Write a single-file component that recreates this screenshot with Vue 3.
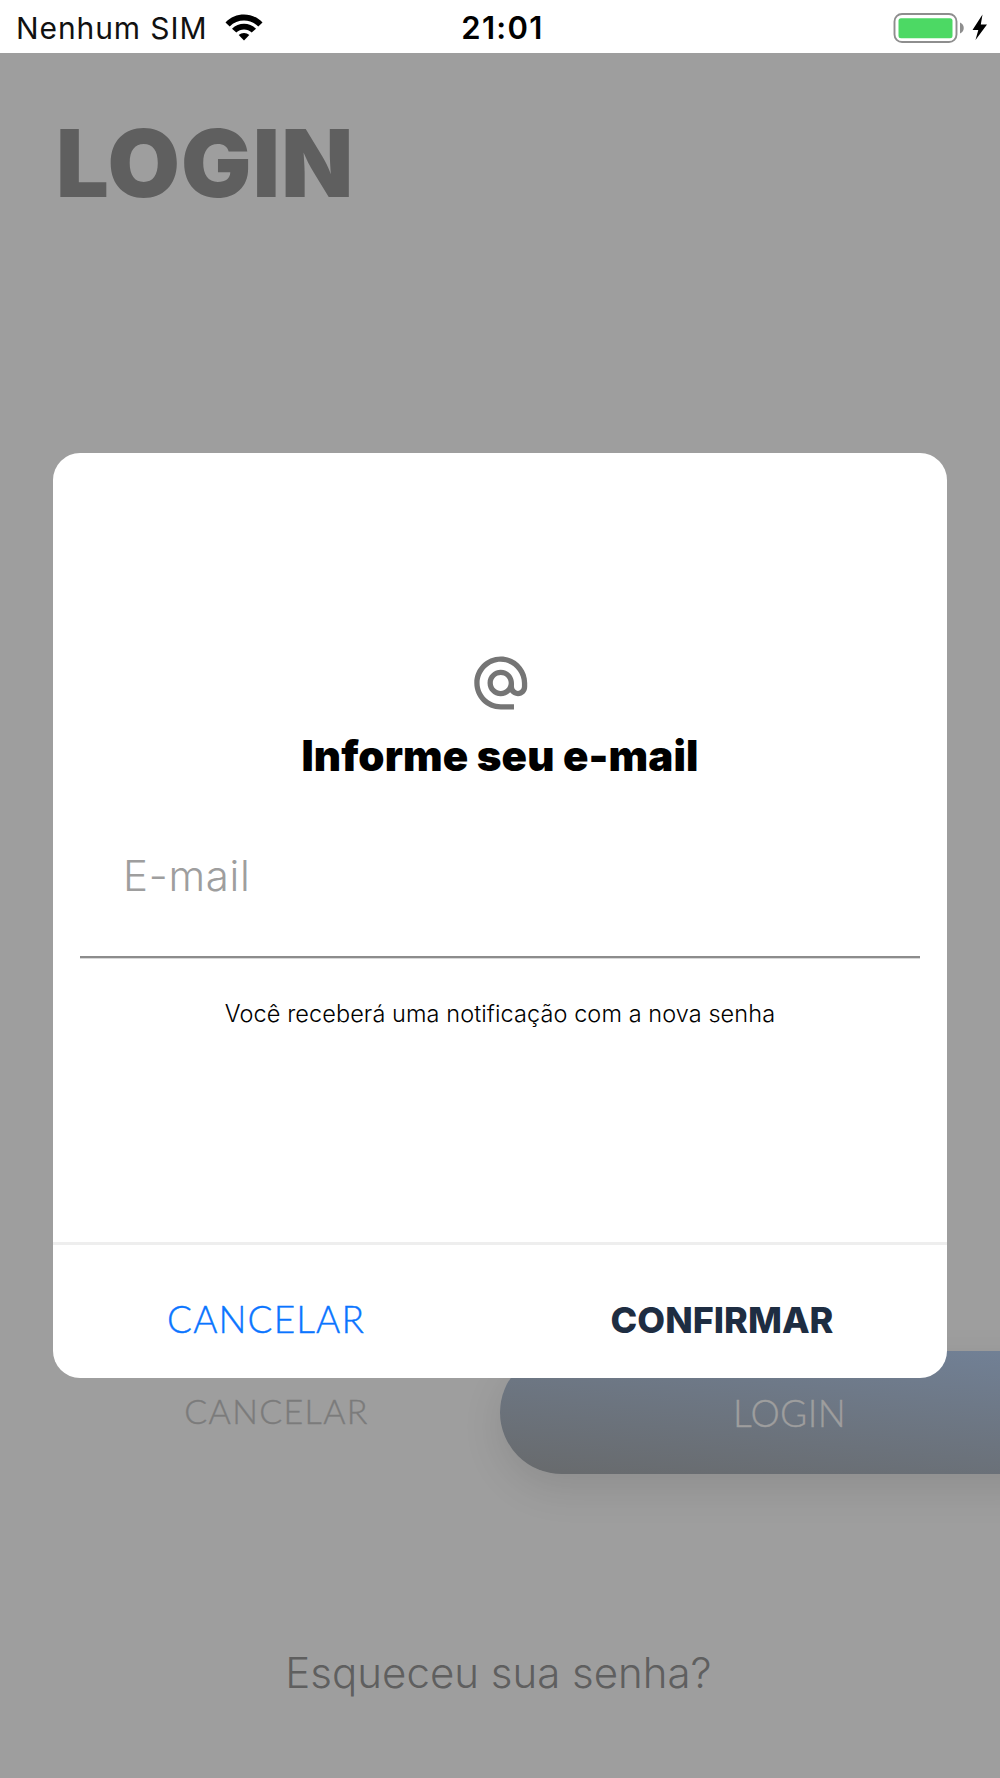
<script setup>
import { ref } from 'vue';

const carrier = ref('Nenhum SIM');
const time = ref('21:01');
const email = ref('');
const showModal = ref(true);

const closeModal = () => {
	showModal.value = false;
};
</script>

<template>
	<div class="screen">
		<header class="status-bar">
			<div class="status-left">
				<span class="carrier">{{ carrier }}</span>
				<svg class="wifi" viewBox="0 0 38 27">
					<path d="M0.5 8.4C10.5-2.1 27.5-2.1 37.5 8.4L33.3 12.4C25.5 4.6 12.5 4.6 4.7 12.4Z" />
					<path d="M7 14.7C13.5 8 24.5 8 31 14.7L26.7 18.5C22.5 14.6 15.5 14.6 11.3 18.5Z" />
					<path d="M13.7 21C16.7 18.3 21.3 18.3 24.3 21L19 26.5Z" />
				</svg>
			</div>
			<span class="time">{{ time }}</span>
			<div class="status-right">
				<svg class="battery" viewBox="0 0 97 32">
					<rect x="2.5" y="2" width="62" height="28" rx="7.5" fill="none" stroke="#8e8e8e" stroke-width="1.9" />
					<rect x="6.5" y="6.2" width="54" height="20" rx="2.5" fill="#4cd964" />
					<path d="M68 10.5C73 12.5 73 19.5 68 21.5Z" fill="#8e8e8e" />
					<path d="M90.5 2.5L80.5 18H86.3L83.5 28L95 12.5H88.8Z" fill="#000" />
				</svg>
			</div>
		</header>

		<main class="page">
			<h1 class="title">LOGIN</h1>

			<div class="actions">
				<button class="btn-cancel" type="button">CANCELAR</button>
				<button class="btn-login" type="button">LOGIN</button>
			</div>

			<a class="forgot">Esqueceu sua senha?</a>

			<div v-if="showModal" class="overlay">
				<form class="modal" @submit.prevent="closeModal">
					<div class="modal-body">
						<svg class="at-icon" viewBox="0 0 24 24">
							<path
								d="M12 2C6.48 2 2 6.48 2 12s4.48 10 10 10h5v-2h-5c-4.34 0-8-3.66-8-8s3.66-8 8-8 8 3.66 8 8v1.43c0 .79-.71 1.57-1.5 1.57s-1.5-.78-1.5-1.57V12c0-2.76-2.24-5-5-5s-5 2.24-5 5 2.24 5 5 5c1.38 0 2.64-.56 3.54-1.47.65.89 1.77 1.47 2.96 1.47 1.97 0 3.5-1.6 3.5-3.57V12c0-5.52-4.48-10-10-10zm0 13c-1.66 0-3-1.34-3-3s1.34-3 3-3 3 1.34 3 3-1.34 3-3 3z"
							/>
						</svg>
						<h2 class="modal-title">Informe seu e-mail</h2>
						<input v-model="email" class="field" type="email" placeholder="E-mail" />
						<p class="hint">Você receberá uma notificação com a nova senha</p>
					</div>
					<div class="modal-footer">
						<button class="modal-btn cancel" type="button" @click="closeModal">CANCELAR</button>
						<button class="modal-btn confirm" type="submit">CONFIRMAR</button>
					</div>
				</form>
			</div>
		</main>
	</div>
</template>

<style>
body {
	margin: 0;
	overflow: hidden;
}
</style>

<style scoped>
.screen {
	width: 100%;
	height: 1778px;
	display: flex;
	flex-direction: column;
	overflow: hidden;
	font-family: Inter, 'Open Sans', sans-serif;
	background-color: #fff;
}

button,
input {
	margin: 0;
	padding: 0;
	border: none;
	outline: none;
	background: none;
	font-family: inherit;
}

.status-bar {
	height: 53px;
	flex: none;
	display: grid;
	grid-template-columns: 1fr auto 1fr;
	align-items: center;
	box-sizing: border-box;
	padding: 2px 11px 0 16px;
	color: #000;
}
.status-left {
	display: flex;
	align-items: center;
	gap: 18px;
}
.carrier {
	font-size: 30px;
	letter-spacing: 0.9px;
	color: #111;
}
.wifi {
	width: 38px;
	height: 27px;
}
.time {
	font-size: 31px;
	font-weight: 600;
	letter-spacing: 1.3px;
}
.status-right {
	display: flex;
	justify-content: flex-end;
}
.battery {
	width: 97px;
	height: 32px;
}

.page {
	position: relative;
	flex: 1;
	display: flex;
	flex-direction: column;
	overflow: hidden;
	background-color: #9e9e9e;
}
.title {
	margin: 53px 0 0 56px;
	font-size: 93.5px;
	line-height: 114px;
	font-weight: 900;
	letter-spacing: 1.2px;
	color: #5f5f5f;
}

.actions {
	height: 123px;
	margin-top: 1131px;
	display: flex;
}
.btn-cancel {
	width: 500px;
	flex: none;
	box-sizing: border-box;
	padding: 0 0 4px 53px;
	font-family: Lato, sans-serif;
	font-size: 34px;
	font-weight: 300;
	letter-spacing: 1.35px;
	color: #7b7b7b;
	-webkit-text-stroke: 0.4px #7b7b7b;
}
.btn-login {
	width: 579px;
	flex: none;
	border-radius: 62px;
	font-family: Lato, sans-serif;
	font-size: 37px;
	font-weight: 300;
	letter-spacing: 0.4px;
	color: #9e9e9e;
	-webkit-text-stroke: 0.4px #9e9e9e;
	background: linear-gradient(186deg, #718095 5%, #686b6e 95%);
	box-shadow: 0 14px 40px rgba(0, 0, 0, 0.1);
}

.forgot {
	margin-top: 174px;
	padding-right: 3px;
	text-align: center;
	font-size: 42px;
	line-height: 50px;
	font-weight: 300;
	color: #5f5f5f;
}

.overlay {
	position: absolute;
	inset: 0;
	display: flex;
	align-items: center;
	justify-content: center;
}
.modal {
	width: 894px;
	height: 925px;
	display: flex;
	flex-direction: column;
	border-radius: 27px;
	background-color: #fff;
}
.modal-body {
	flex: 1;
	display: flex;
	flex-direction: column;
	align-items: center;
	padding: 198px 27px 0;
}
.at-icon {
	width: 63.5px;
	height: 64px;
	margin-left: 1px;
	fill: #757575;
}
.modal-title {
	margin: 16px 0 0;
	font-size: 42px;
	line-height: 50px;
	font-weight: 900;
	letter-spacing: 0.1px;
	color: #000;
}
.field {
	width: 100%;
	height: 177px;
	box-sizing: border-box;
	padding: 69px 42px 56px 43px;
	border-bottom: 2px solid #8c8c8c;
	box-shadow: 0 1px 0 #d8d8d8;
	font-size: 42px;
	font-weight: 300;
	letter-spacing: 0.7px;
	color: #000;
}
.field::placeholder {
	color: #9e9e9e;
	opacity: 1;
}
.hint {
	margin: 41px 0 0;
	font-size: 23.5px;
	line-height: 30px;
	font-weight: 300;
	letter-spacing: 0.08px;
	white-space: nowrap;
	color: #000;
}

.modal-footer {
	height: 133px;
	flex: none;
	display: flex;
	border-top: 3px solid #eee;
}
.modal-btn {
	flex: 1;
}
.modal-btn.cancel {
	padding: 14px 30px 0 0;
	font-family: Lato, sans-serif;
	font-size: 37px;
	font-weight: 300;
	letter-spacing: 1.1px;
	color: #0a75ff;
	-webkit-text-stroke: 0.4px #0a75ff;
}
.modal-btn.confirm {
	padding: 16px 12px 0 0;
	font-size: 36px;
	font-weight: 800;
	color: #1e2d42;
}
</style>
